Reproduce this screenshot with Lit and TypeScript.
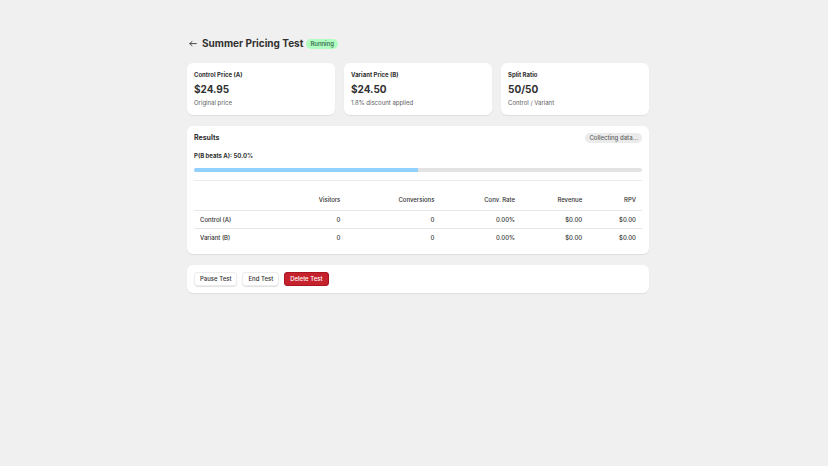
import { LitElement, html, css } from "lit";
import { customElement } from "lit/decorators.js";

interface Summary {
  label: string;
  value: string;
  note: string;
}

const SUMMARIES: Summary[] = [
  { label: "Control Price (A)", value: "$24.95", note: "Original price" },
  { label: "Variant Price (B)", value: "$24.50", note: "1.8% discount applied" },
  { label: "Split Ratio", value: "50/50", note: "Control / Variant" },
];

const COLUMNS = ["Visitors", "Conversions", "Conv. Rate", "Revenue", "RPV"];

const ROWS = [
  { name: "Control (A)", cells: ["0", "0", "0.00%", "$0.00", "$0.00"] },
  { name: "Variant (B)", cells: ["0", "0", "0.00%", "$0.00", "$0.00"] },
];

@customElement("app-root")
export class AppRoot extends LitElement {
  static styles = css`
    :host {
      display: block;
      min-height: 100vh;
      box-sizing: border-box;
      padding: 36px 16px 36px 24px;
      background: #f0f0f0;
      color: #303030;
      font: 450 6px/10px Inter, "Liberation Sans", sans-serif;
    }
    *, *::before { box-sizing: border-box; }
    h1, h2, h3, p { margin: 0; font-size: inherit; }
    .page { max-width: 462px; margin: 0 auto; }
    .header { display: flex; align-items: center; gap: 3px; margin-bottom: 12px; }
    .back { display: flex; padding: 2px; color: #4a4a4a; }
    .back svg { width: 8px; height: 8px; }
    h1 { font-size: 10px; line-height: 15px; font-weight: 650; }
    .badge {
      padding: 0 4px;
      border-radius: 5px;
      background: #ebebeb;
      color: #616161;
      font-weight: 550;
    }
    .badge.success { background: #affebf; color: #2c5a48; }
    .card {
      background: #fff;
      border-radius: 6px;
      padding: 7px;
      box-shadow: 0 1px 1px rgba(0, 0, 0, 0.08);
    }
    .summaries {
      display: grid;
      grid-template-columns: repeat(3, 1fr);
      gap: 9px;
      margin-bottom: 11px;
    }
    .summary { display: flex; flex-direction: column; gap: 4px; padding: 7px; }
    h3, h2 { font-weight: 650; }
    h2 { font-size: 7px; }
    .value { font-size: 10px; font-weight: 650; }
    h1, .value { font-variation-settings: "opsz" 20; }
    .note { color: #616161; font-weight: 400; }
    .results { margin-bottom: 11px; padding-bottom: 8px; }
    .results-head { display: flex; justify-content: space-between; margin-bottom: 8px; }
    .probability { display: block; font-weight: 650; margin-bottom: 7px; }
    .track { height: 4px; border-radius: 2px; background: #e3e3e3; overflow: hidden; }
    .fill { height: 100%; background: #91d0ff; }
    .rule { border: 0; border-top: 1px solid #ebebeb; margin: 8px 0 7px; }
    table { width: 100%; table-layout: fixed; border-collapse: collapse; }
    th, td { height: 18px; padding: 2px 6px 0; font-weight: 450; text-align: right; }
    thead th { height: 22px; }
    tbody th { text-align: left; }
    tbody tr { border-top: 1px solid #e6e6e6; }
    .c-name { width: 21%; }
    .c-0 { width: 13%; }
    .c-1 { width: 21%; }
    .c-2 { width: 18%; }
    .c-3 { width: 15%; }
    .c-4 { width: 12%; }
    .actions { display: flex; gap: 5px; }
    button {
      height: 14px;
      padding: 0 6px;
      border: 0;
      border-radius: 4px;
      background: #fff;
      color: #303030;
      font: inherit;
      font-weight: 550;
      box-shadow: 0 0 0 1px #ececec inset, 0 1px 1px rgba(0, 0, 0, 0.12);
    }
    button.critical { background: #c5222d; color: #fff; box-shadow: 0 0 0 1px #a81622 inset; }
  `;

  render() {
    return html`
      <main class="page">
        <header class="header">
          <a class="back" href="#" aria-label="Back">
            <svg viewBox="0 0 8 8" fill="none" stroke="currentColor" stroke-linecap="round" stroke-linejoin="round">
              <path d="M7.3 3.6H.8M3 1.5L.8 3.6 3 5.7" />
            </svg>
          </a>
          <h1>Summer Pricing Test</h1>
          <span class="badge success">Running</span>
        </header>

        <div class="summaries">
          ${SUMMARIES.map(
            (s) => html`
              <section class="card summary">
                <h3>${s.label}</h3>
                <p class="value">${s.value}</p>
                <p class="note">${s.note}</p>
              </section>
            `
          )}
        </div>

        <section class="card results">
          <div class="results-head">
            <h2>Results</h2>
            <span class="badge">Collecting data...</span>
          </div>
          <span class="probability" id="probability">P(B beats A): 50.0%</span>
          <div class="track" role="progressbar" aria-labelledby="probability" aria-valuenow="50" aria-valuemin="0" aria-valuemax="100">
            <div class="fill" style="width: 50%"></div>
          </div>
          <hr class="rule" />
          <table>
            <thead>
              <tr>
                <th class="c-name"></th>
                ${COLUMNS.map((c, i) => html`<th class="c-${i}" scope="col">${c}</th>`)}
              </tr>
            </thead>
            <tbody>
              ${ROWS.map(
                (r) => html`
                  <tr>
                    <th scope="row">${r.name}</th>
                    ${r.cells.map((c) => html`<td>${c}</td>`)}
                  </tr>
                `
              )}
            </tbody>
          </table>
        </section>

        <div class="card actions">
          <button type="button">Pause Test</button>
          <button type="button">End Test</button>
          <button type="button" class="critical">Delete Test</button>
        </div>
      </main>
    `;
  }
}
